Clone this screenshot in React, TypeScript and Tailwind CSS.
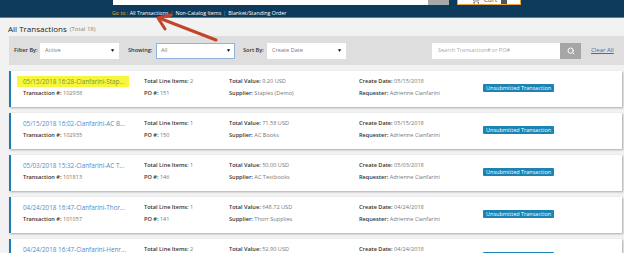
import { Search, ShoppingCart } from 'lucide-react';

type Txn = {
  title: string;
  id: string;
  lines: string;
  po: string;
  value: string;
  supplier: string;
  date: string;
  highlight?: boolean;
};

const TXNS: Txn[] = [
  { title: '05/15/2018 16:28-Cianfarini-Stap...', id: '102938', lines: '2', po: '151', value: '9.20 USD', supplier: 'Staples (Demo)', date: '05/15/2018', highlight: true },
  { title: '05/15/2018 16:02-Cianfarini-AC B...', id: '102935', lines: '1', po: '150', value: '71.58 USD', supplier: 'AC Books', date: '05/15/2018' },
  { title: '05/03/2018 15:32-Cianfarini-AC T...', id: '101813', lines: '1', po: '146', value: '50.00 USD', supplier: 'AC Textbooks', date: '05/03/2018' },
  { title: '04/24/2018 16:47-Cianfarini-Thor...', id: '101057', lines: '1', po: '141', value: '648.72 USD', supplier: 'Thorr Supplies', date: '04/24/2018' },
  { title: '04/24/2018 16:47-Cianfarini-Henr...', id: '101056', lines: '2', po: '140', value: '52.90 USD', supplier: 'Henry Schein', date: '04/24/2018' },
];

function Field({ label, value }: { label: string; value: string }) {
  return (
    <div className="h-[9px] leading-[9px] text-[5.6px] whitespace-nowrap">
      <span className="text-[#333] font-semibold">{label}:</span>{' '}
      <span className="text-[#777]">{value}</span>
    </div>
  );
}

function Label({ text, className }: { text: string; className?: string }) {
  return (
    <span className={`shrink-0 whitespace-nowrap text-[5.6px] font-semibold text-[#333] ${className ?? ''}`}>
      {text}
    </span>
  );
}

function Select({ value, focused }: { value: string; focused?: boolean }) {
  return (
    <div
      className={`shrink-0 w-[79px] h-[16px] bg-white flex items-center justify-between pl-[4px] pr-[3px] border ${
        focused ? 'border-[#8fb3dd]' : 'border-white'
      }`}
    >
      <span className="text-[5.6px] text-[#777] whitespace-nowrap">{value}</span>
      <span className="text-[5px] text-black">▼</span>
    </div>
  );
}

function Card({ t }: { t: Txn }) {
  return (
    <div className="h-[36px] shrink-0 bg-white border-l-[2px] border-[#1b7cb3] shadow-[1px_1px_2px_rgba(0,0,0,0.3)] grid grid-cols-[121px_85px_130px_124px_auto] pl-[12px] pt-[6px]">
      <div className="flex flex-col gap-[3px]">
        <div className="h-[9px] leading-[9px] text-[6.3px] whitespace-nowrap">
          <span className={t.highlight ? 'bg-[#f7f53c] -ml-[6px] pl-[6px] pr-[5px] py-[1px] text-[#7a9a3a]' : 'text-[#4f8cc6]'}>
            {t.title}
          </span>
        </div>
        <Field label="Transaction #" value={t.id} />
      </div>
      <div className="flex flex-col gap-[3px]">
        <Field label="Total Line Items" value={t.lines} />
        <Field label="PO #" value={t.po} />
      </div>
      <div className="flex flex-col gap-[3px]">
        <Field label="Total Value" value={t.value} />
        <Field label="Supplier" value={t.supplier} />
      </div>
      <div className="flex flex-col gap-[3px]">
        <Field label="Create Date" value={t.date} />
        <Field label="Requester" value="Adrienne Cianfarini" />
      </div>
      <div className="flex items-start pt-[7px]">
        <span className="h-[8px] leading-[8px] px-[3px] bg-[#1b84b5] text-white text-[5.5px] rounded-[1px] whitespace-nowrap">
          Unsubmitted Transaction
        </span>
      </div>
    </div>
  );
}

export default function App() {
  return (
    <div
      className="relative w-[624px] h-[253px] overflow-hidden bg-[#f2f2f2]"
      style={{ fontFamily: '"Open Sans", "Noto Sans", sans-serif' }}
    >
      {/* header */}
      <div className="h-[18px] bg-[#0e3b5c] border-b border-[#5d7f97] relative overflow-hidden">
        <div className="flex items-start pl-[113px] -mt-[12px]">
          <div className="w-[315px] h-[17px] bg-white" />
          <div className="w-[21px] h-[17px] bg-[#a9a9a9]" />
          <div className="ml-[8px] w-[64px] h-[17px] bg-white border border-[#e9a53a] flex items-end justify-center gap-[4px] text-[#555]">
            <ShoppingCart size={9} />
            <span className="text-[7px] leading-[8px]">Cart</span>
            <span className="w-[6px] h-[6px] bg-[#555]" />
          </div>
        </div>
        <div className="absolute left-[112px] top-[9px] text-[5.3px] leading-[8px] whitespace-nowrap text-white">
          <span className="text-[#f0a81c]">Go to : </span>
          <span>All Transactions</span>
          <span className="text-[#8aa] mx-[2px]">|</span>
          <span>Non-Catalog Items</span>
          <span className="text-[#8aa] mx-[2px]">|</span>
          <span>Blanket/Standing Order</span>
        </div>
      </div>

      {/* title */}
      <div className="pl-[8px] pt-[4px] h-[18px] flex items-center gap-[3px]">
        <span className="text-[8px] text-[#222]">All Transactions</span>
        <span className="text-[6px] text-[#888]">(Total 18)</span>
      </div>

      {/* filter bar */}
      <div className="ml-[9px] h-[29px] bg-[#dedede] flex items-center pl-[5px]">
        <Label text="Filter By:" className="w-[26px]" />
        <Select value="Active" />
        <Label text="Showing:" className="ml-[9px] w-[28px]" />
        <Select value="All" focused />
        <Label text="Sort By:" className="ml-[8px] w-[24px]" />
        <Select value="Create Date" />
        <div className="shrink-0 ml-[86px] w-[128px] h-[16px] bg-white flex items-center pl-[6px]">
          <span className="text-[5.5px] text-[#aaa] whitespace-nowrap">Search Transaction# or PO#</span>
        </div>
        <div className="shrink-0 w-[21px] h-[16px] bg-[#a6a6a6] flex items-center justify-center text-white">
          <Search size={8} strokeWidth={3} />
        </div>
        <span className="shrink-0 whitespace-nowrap ml-[10px] text-[6px] text-[#3a6fb0] underline">Clear All</span>
      </div>

      {/* list */}
      <div className="ml-[9px] mr-[2px] mt-[6px] flex flex-col gap-[6px]">
        {TXNS.map((t) => (
          <Card key={t.id} t={t} />
        ))}
      </div>

      {/* annotation arrow */}
      <svg className="absolute left-0 top-0 pointer-events-none" width="624" height="253">
        <g stroke="#c2452b" strokeWidth="3" strokeLinecap="round" strokeLinejoin="round" fill="none">
          <line x1="216" y1="40" x2="159" y2="18" />
          <polyline points="171,15 158,18 165,29" />
        </g>
      </svg>
    </div>
  );
}
